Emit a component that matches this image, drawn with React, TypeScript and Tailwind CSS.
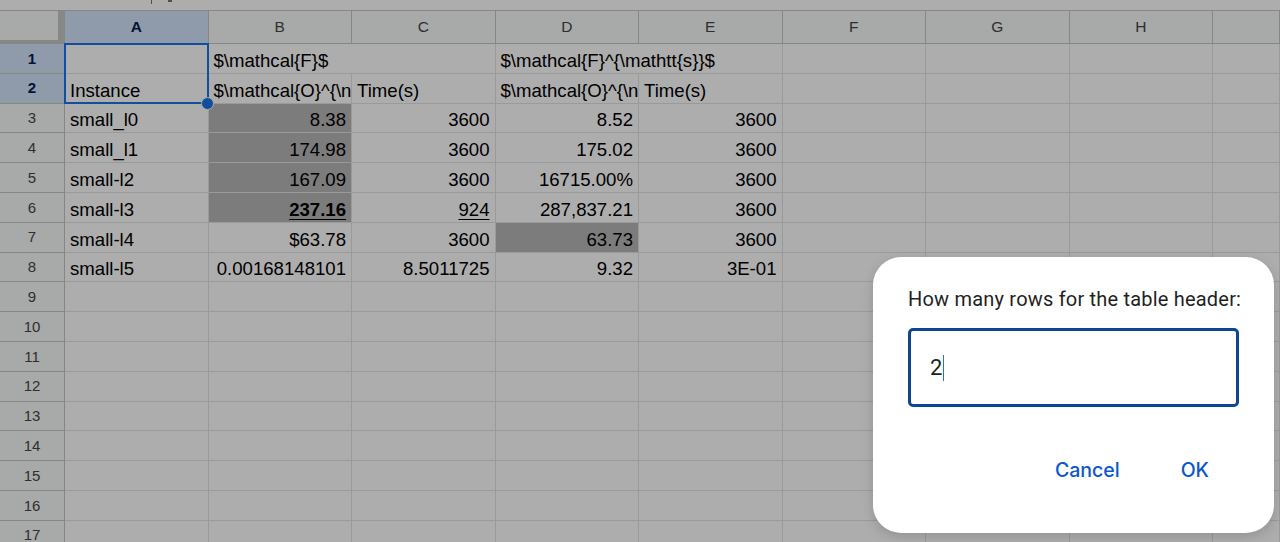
import React from 'react';

type Cell = {
  t?: string;
  right?: boolean;
  bold?: boolean;
  under?: boolean;
  fill?: boolean;
  spill?: boolean;
  clip?: boolean;
};

const COLS = ['A', 'B', 'C', 'D', 'E', 'F', 'G', 'H', ''];
const COL_W = 143.5;

const r = (t: string, extra: Partial<Cell> = {}): Cell => ({ t, right: true, ...extra });
const l = (t: string, extra: Partial<Cell> = {}): Cell => ({ t, ...extra });

const DATA: Cell[][] = [
  [l(''), l('$\\mathcal{F}$', { spill: true }), l(''), l('$\\mathcal{F}^{\\mathtt{s}}$', { spill: true }), l('')],
  [l('Instance'), l('$\\mathcal{O}^{\\nu}$', { clip: true }), l('Time(s)'), l('$\\mathcal{O}^{\\nu}$', { clip: true }), l('Time(s)')],
  [l('small_l0'), r('8.38', { fill: true }), r('3600'), r('8.52'), r('3600')],
  [l('small_l1'), r('174.98', { fill: true }), r('3600'), r('175.02'), r('3600')],
  [l('small-l2'), r('167.09', { fill: true }), r('3600'), r('16715.00%'), r('3600')],
  [l('small-l3'), r('237.16', { fill: true, bold: true, under: true }), r('924', { under: true }), r('287,837.21'), r('3600')],
  [l('small-l4'), r('$63.78'), r('3600'), r('63.73', { fill: true }), r('3600')],
  [l('small-l5'), r('0.00168148101'), r('8.5011725'), r('9.32'), r('3E-01')],
];

const ROWS = 17;

function SheetCell({ cell, last, z }: { cell?: Cell; last: boolean; z: number }) {
  const c = cell ?? {};
  return (
    <div
      className={`relative flex items-end h-full shrink-0 border-b border-[#e2e3e3] ${c.spill ? '' : 'border-r'} ${
        c.fill ? 'bg-[#b7b7b7]' : ''
      } ${c.right ? 'justify-end pr-[5px]' : 'pl-[5px]'} ${c.clip ? 'overflow-hidden' : ''} ${last ? 'grow' : ''}`}
      style={{ width: last ? undefined : COL_W, zIndex: z }}
    >
      {c.t ? (
        <span
          className={`whitespace-nowrap leading-[22px] pb-[1px] text-[18.6px] text-black ${c.bold ? 'font-bold' : ''} ${
            c.under ? 'underline underline-offset-[3px]' : ''
          }`}
        >
          {c.t}
        </span>
      ) : null}
    </div>
  );
}

export default function App() {
  return (
    <div className="relative w-[1280px] h-[542px] overflow-hidden bg-white font-['Liberation_Sans',Arial,sans-serif]">
      {/* remnant of the formula bar */}
      <div className="relative h-[11px] border-b border-[#c4c7c5] bg-white">
        <div className="absolute left-[151px] top-0 w-px h-[4px] bg-[#747775]" />
        <div className="absolute left-[168px] top-0 w-[4px] h-[2px] bg-[#747775]" />
      </div>

      {/* column headers */}
      <div className="flex h-[33px] bg-[#f8f9fa] border-b border-[#c4c7c5]">
        <div className="flex shrink-0 w-[65px] h-full">
          <div className="w-[58px] h-full flex flex-col">
            <div className="grow bg-[#f8f9fa]" />
            <div className="h-[3px] bg-[#c7c7c7]" />
          </div>
          <div className="w-[7px] h-full bg-[#c7c7c7]" />
        </div>
        {COLS.map((c, i) => (
          <div
            key={i}
            className={`flex items-center justify-center shrink-0 h-full border-r border-[#c4c7c5] text-[15.5px] ${
              i === 0 ? 'bg-[#d3e3fd] text-[#041e49] font-bold' : 'text-[#444746]'
            } ${i === COLS.length - 1 ? 'grow' : ''}`}
            style={{ width: i === COLS.length - 1 ? undefined : COL_W }}
          >
            {c}
          </div>
        ))}
      </div>

      {/* rows */}
      <div className="relative">
        {Array.from({ length: ROWS }).map((_, ri) => (
          <div key={ri} className="flex h-[29.8px]">
            <div
              className={`flex items-center justify-center pt-[1px] shrink-0 w-[65px] h-full border-r border-b border-[#c4c7c5] text-[15px] ${
                ri < 2 ? 'bg-[#d3e3fd] text-[#041e49] font-bold' : 'bg-[#f8f9fa] text-[#444746]'
              }`}
            >
              {ri + 1}
            </div>
            {COLS.map((_, ci) => (
              <SheetCell key={ci} cell={DATA[ri]?.[ci]} last={ci === COLS.length - 1} z={COLS.length - ci} />
            ))}
          </div>
        ))}

        {/* selection A1:A2 */}
        <div className="absolute left-[64px] top-[-1px] w-[145px] h-[61px] border-2 border-[#1a73e8] z-20 pointer-events-none" />
        <div className="absolute left-[201px] top-[53px] w-[13px] h-[13px] rounded-full bg-[#1a73e8] border border-white z-20" />
      </div>

      {/* dim overlay */}
      <div className="absolute inset-0 bg-black/[0.32] z-30" />

      {/* prompt dialog */}
      <div className="absolute left-[873px] top-[257px] w-[401px] h-[276px] z-40 bg-white rounded-[28px] shadow-[0_4px_12px_rgba(0,0,0,0.15)] pt-[29px] px-[35px] font-['Roboto',sans-serif]">
        <div className="leading-[26px] text-[20px] tracking-[0.2px] text-[#1f1f1f] whitespace-nowrap">How many rows for the table header:</div>
        <div className="mt-[16px] h-[79px] rounded-[5px] border-[3px] border-[#0f4592] flex items-center pl-[19px]">
          <span className="text-[22px] text-[#1f1f1f] leading-none">2</span>
          <span className="ml-[1px] w-px h-[26px] bg-[#1a73e8]" />
        </div>
        <div className="mt-[50px] flex justify-end items-center gap-[61px] pr-[30px] font-['Inter',sans-serif]">
          <span className="text-[19.5px] leading-[26px] font-medium text-[#0b57d0]">Cancel</span>
          <span className="text-[19.5px] leading-[26px] font-medium text-[#0b57d0]">OK</span>
        </div>
      </div>
    </div>
  );
}
